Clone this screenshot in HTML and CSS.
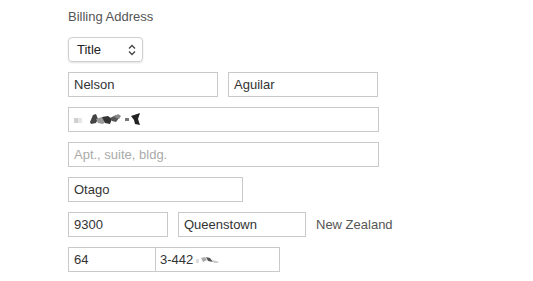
FILE: index.html
```html
<!DOCTYPE html>
<html lang="en">
<head>
  <meta charset="UTF-8" />
  <meta name="viewport" content="width=device-width, initial-scale=1.0"/>
  <title>Billing Address</title>
  <link rel="stylesheet" href="styles.css">
</head>
<body>
  <form class="billing">
    <div class="heading">Billing Address</div>

    <div class="row">
      <div class="select">
        <span>Title</span>
        <svg class="chevrons" width="8" height="12" viewBox="0 0 8 12">
          <path d="M1 4.5 L4 1.5 L7 4.5 M1 7.5 L4 10.5 L7 7.5" fill="none" stroke="#444" stroke-width="1.3"/>
        </svg>
      </div>
    </div>

    <div class="row">
      <div class="field w-150">Nelson</div>
      <div class="field w-150">Aguilar</div>
    </div>

    <div class="row">
      <div class="field w-311">
        <svg class="blur" width="72" height="16" viewBox="0 0 72 16">
          <rect x="0" y="6" width="4" height="5" fill="#d0d0d0"/>
          <rect x="4" y="6" width="4" height="5" fill="#e6e6e6"/>
          <polygon points="16,10 19,3 22,2 24,7 22,11 17,12" fill="#444"/>
          <polygon points="22,7 28,5 32,9 29,12 24,11" fill="#999"/>
          <polygon points="28,5 34,4 38,7 36,12 31,11" fill="#333"/>
          <polygon points="36,6 42,3 45,6 42,10 38,9" fill="#555"/>
          <polygon points="40,5 44,2 47,4 45,7" fill="#888"/>
          <rect x="51" y="6" width="4" height="3" fill="#777"/>
          <polygon points="57,4 66,1 64,7 66,13 61,12 60,8" fill="#222"/>
        </svg>
      </div>
    </div>

    <div class="row">
      <div class="field w-311 placeholder">Apt., suite, bldg.</div>
    </div>

    <div class="row">
      <div class="field w-175">Otago</div>
    </div>

    <div class="row">
      <div class="field w-100">9300</div>
      <div class="field w-128">Queenstown</div>
      <div class="country">New Zealand</div>
    </div>

    <div class="row phone">
      <div class="field w-88">64</div>
      <div class="field w-124">3-442
        <svg class="blur" width="26" height="12" viewBox="0 0 26 12">
          <rect x="1" y="5" width="3" height="4" fill="#ddd"/>
          <polygon points="6,4 10,3 12,6 8,8" fill="#aaa"/>
          <polygon points="11,3 15,4 18,8 13,7" fill="#555"/>
          <polygon points="17,6 22,7 24,9 19,9" fill="#ccc"/>
        </svg>
      </div>
    </div>
  </form>
</body>
</html>
```

FILE: styles.css
```css
body {
  margin: 0;
  background: #fff;
  font-family: "Liberation Sans", Arial, sans-serif;
  font-size: 13px;
  color: #333;
}
.billing {
  padding: 9px 0 0 68px;
  display: flex;
  flex-direction: column;
  gap: 10px;
}
.heading {
  color: #555;
  line-height: 16px;
  margin-bottom: 2px;
}
.row {
  display: flex;
  align-items: center;
  gap: 10px;
}
.field {
  box-sizing: border-box;
  height: 25px;
  border: 1px solid #c9c9c9;
  padding: 0 5px;
  display: flex;
  align-items: center;
  white-space: nowrap;
}
.placeholder { color: #aaa; }
.w-88 { width: 88px; }
.w-100 { width: 100px; }
.w-124 { width: 124px; }
.w-128 { width: 128px; }
.w-150 { width: 150px; }
.w-175 { width: 175px; }
.w-311 { width: 311px; }
.phone { gap: 0; }
.phone .field + .field { border-left: none; padding-left: 4px; }
.country { color: #555; }
.select {
  box-sizing: border-box;
  width: 75px;
  height: 25px;
  border: 1px solid #cfcfcf;
  border-radius: 4px;
  box-shadow: 0 1px 2px rgba(0, 0, 0, 0.12);
  padding: 0 6px 0 8px;
  display: flex;
  align-items: center;
  justify-content: space-between;
  color: #222;
}
.blur { display: block; }
.phone .blur { margin-left: 2px; }
```
